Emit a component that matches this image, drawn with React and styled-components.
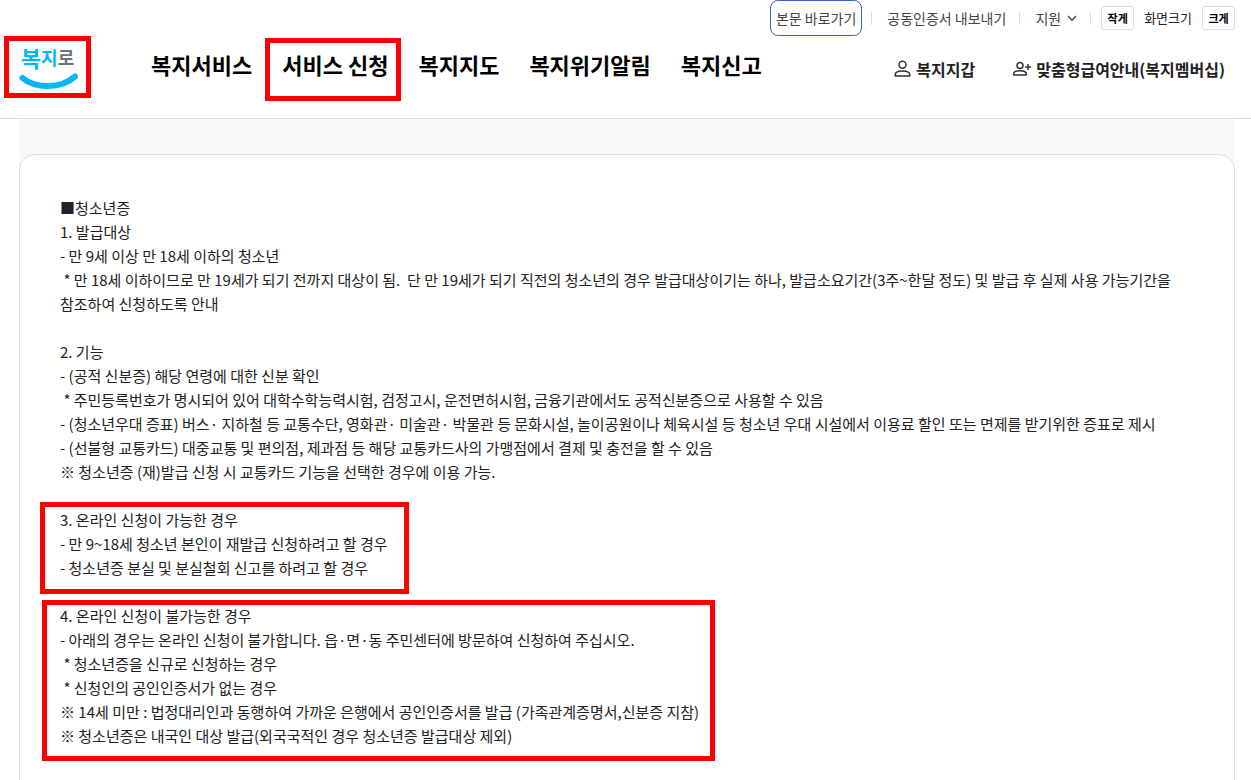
import React from "react";
import styled, { createGlobalStyle } from "styled-components";

const GlobalStyle = createGlobalStyle`
  *, *::before, *::after { box-sizing: border-box; }
  body {
    margin: 0;
    background: #fff;
    color: #222;
    font-family: "Noto Sans CJK KR", "Noto Sans", sans-serif;
    font-size: 15px;
    line-height: 24px;
  }
  a { color: inherit; text-decoration: none; }
  button { font: inherit; color: inherit; margin: 0; cursor: pointer; }
`;

const Header = styled.header`
  border-bottom: 1px solid #ddd;
`;

const UtilBar = styled.div`
  display: flex;
  align-items: center;
  justify-content: flex-end;
  height: 36px;
  padding-right: 16px;
  font-size: 14px;
  color: #444;
`;

const SkipLink = styled.a`
  display: flex;
  align-items: center;
  height: 36px;
  padding: 0 5px;
  border: 1px solid #3f5fd0;
  border-radius: 8px;
`;

const Divider = styled.span`
  width: 1px;
  height: 13px;
  margin: 0 ${(p) => p.$after || 15}px 0 ${(p) => p.$before || 13}px;
  background: #ddd;
`;

const SupportButton = styled.button`
  display: flex;
  align-items: center;
  gap: 6px;
  padding: 0;
  border: 0;
  background: none;
`;

const ZoomControls = styled.div`
  display: flex;
  align-items: center;
  gap: 10px;
  font-size: 13px;
  color: #222;
`;

const ZoomButton = styled.button`
  width: 33px;
  height: 24px;
  padding: 0;
  border: 1px solid #ddd;
  border-radius: 3px;
  background: #fff;
  color: #000;
  font-size: 11px;
  font-weight: 700;
  line-height: 20px;
`;

const MainBar = styled.div`
  display: flex;
  align-items: flex-start;
  padding: 0 26px 16px 4px;
`;

const Logo = styled.a`
  display: flex;
  flex-direction: column;
  align-items: center;
  width: 87px;
  height: 62px;
  margin-right: 60px;
  border: 5px solid #f00;
  overflow: hidden;
`;

const LogoText = styled.span`
  display: flex;
  align-items: center;
  height: 32px;
  font-size: 18px;
  font-weight: 700;
  line-height: 32px;
  color: #04b6f2;
`;

const LogoLead = styled.span`
  font-size: 22px;
`;

const LogoTail = styled.span`
  color: #707478;
`;

const Nav = styled.nav`
  display: flex;
  gap: 30px;
`;

const NavLink = styled.a`
  position: relative;
  color: #000;
  font-size: 22px;
  font-weight: 700;
  line-height: 56px;
  white-space: nowrap;

  ${(p) =>
    p.$marked &&
    `&::after {
      content: "";
      position: absolute;
      inset: 2px -13px -9px -17px;
      border: 5px solid #f00;
    }`}
`;

const QuickLinks = styled.div`
  display: flex;
  gap: 36px;
  margin-left: auto;
`;

const QuickLink = styled.a`
  display: flex;
  align-items: center;
  gap: 4px;
  height: 66px;
  font-size: 16px;
  font-weight: 700;
  white-space: nowrap;
`;

const Main = styled.main`
  margin: 0 16px 0 19px;
  padding-top: 35px;
  background: #f9f9f9;
`;

const Card = styled.article`
  padding: 41px 40px;
  border: 1px solid #ddd;
  border-radius: 16px 16px 0 0;
  background: #fff;
`;

const Section = styled.section`
  position: relative;
  width: ${(p) => (p.$mark ? "fit-content" : "auto")};
  margin-bottom: 24px;

  ${(p) =>
    p.$mark &&
    `&::after {
      content: "";
      position: absolute;
      inset: ${p.$mark};
      border: 5px solid #f00;
      pointer-events: none;
    }`}
`;

const Title = styled.h2`
  margin: 0;
  font-size: inherit;
  font-weight: 400;
`;

const Line = styled.p`
  margin: 0;
  white-space: pre-wrap;
  word-break: keep-all;
`;

const PersonIcon = () => (
  <svg width="18" height="18" viewBox="0 0 18 18" fill="none" stroke="#333" strokeWidth="1.5" aria-hidden="true">
    <circle cx="8.500" cy="4.700" r="3.500" />
    <path d="M1.200 16v-1.200c0-2.300 3-3.900 7.300-3.900s7.300 1.600 7.300 3.900V16z" strokeLinejoin="round" />
  </svg>
);

const PersonAddIcon = () => (
  <svg width="21" height="18" viewBox="0 0 21 18" fill="none" stroke="#333" strokeWidth="1.5" aria-hidden="true">
    <circle cx="9" cy="5.500" r="3" />
    <path d="M2.700 15v-1c0-1.900 2.500-3.300 6.300-3.300s6.300 1.400 6.300 3.300v1z" strokeLinejoin="round" />
    <path d="M17 4v6M14 7h6" />
  </svg>
);

const Chevron = () => (
  <svg width="10" height="7" viewBox="0 0 10 7" fill="none" stroke="#444" strokeWidth="1.3" aria-hidden="true">
    <path d="M1 1l4 4.3L9 1" />
  </svg>
);

const Smile = () => (
  <svg width="60" height="17" viewBox="0 0 60 17" fill="none" stroke="#04b6f2" strokeLinecap="round" aria-hidden="true">
    <path d="M4.500 5C18 16 43 16 57 3.500" strokeWidth="6" />
  </svg>
);

const sections = [
  {
    title: "■청소년증",
    lines: [
      "1. 발급대상",
      "- 만 9세 이상 만 18세 이하의 청소년",
      " * 만 18세 이하이므로 만 19세가 되기 전까지 대상이 됨.  단 만 19세가 되기 직전의 청소년의 경우 발급대상이기는 하나, 발급소요기간(3주~한달 정도) 및 발급 후 실제 사용 가능기간을 참조하여 신청하도록 안내",
    ],
  },
  {
    title: "2. 기능",
    lines: [
      "- (공적 신분증) 해당 연령에 대한 신분 확인",
      " * 주민등록번호가 명시되어 있어 대학수학능력시험, 검정고시, 운전면허시험, 금융기관에서도 공적신분증으로 사용할 수 있음",
      "- (청소년우대 증표) 버스· 지하철 등 교통수단, 영화관· 미술관· 박물관 등 문화시설, 놀이공원이나 체육시설 등 청소년 우대 시설에서 이용료 할인 또는 면제를 받기위한 증표로 제시",
      "- (선불형 교통카드) 대중교통 및 편의점, 제과점 등 해당 교통카드사의 가맹점에서 결제 및 충전을 할 수 있음",
      "※ 청소년증 (재)발급 신청 시 교통카드 기능을 선택한 경우에 이용 가능.",
    ],
  },
  {
    title: "3. 온라인 신청이 가능한 경우",
    mark: "-6px -21px -14px -20px",
    lines: [
      "- 만 9~18세 청소년 본인이 재발급 신청하려고 할 경우",
      "- 청소년증 분실 및 분실철회 신고를 하려고 할 경우",
    ],
  },
  {
    title: "4. 온라인 신청이 불가능한 경우",
    mark: "-4px -16px -13px -18px",
    lines: [
      "- 아래의 경우는 온라인 신청이 불가합니다. 읍·면·동 주민센터에 방문하여 신청하여 주십시오.",
      " * 청소년증을 신규로 신청하는 경우",
      " * 신청인의 공인인증서가 없는 경우",
      "※ 14세 미만 : 법정대리인과 동행하여 가까운 은행에서 공인인증서를 발급 (가족관계증명서,신분증 지참)",
      "※ 청소년증은 내국인 대상 발급(외국국적인 경우 청소년증 발급대상 제외)",
    ],
  },
];

const menu = ["복지서비스", "서비스 신청", "복지지도", "복지위기알림", "복지신고"];

export default function App() {
  return (
    <>
      <GlobalStyle />
      <Header>
        <UtilBar>
          <SkipLink href="#content">본문 바로가기</SkipLink>
          <Divider $before={9} />
          <a href="#certificate">공동인증서 내보내기</a>
          <Divider />
          <SupportButton type="button">
            지원
            <Chevron />
          </SupportButton>
          <Divider $after={10} />
          <ZoomControls>
            <ZoomButton type="button">작게</ZoomButton>
            <span>화면크기</span>
            <ZoomButton type="button">크게</ZoomButton>
          </ZoomControls>
        </UtilBar>
        <MainBar>
          <Logo href="#home">
            <LogoText>
              <LogoLead>복</LogoLead>지<LogoTail>로</LogoTail>
            </LogoText>
            <Smile />
          </Logo>
          <Nav>
            {menu.map((name) => (
              <NavLink key={name} href="#menu" $marked={name === "서비스 신청"}>
                {name}
              </NavLink>
            ))}
          </Nav>
          <QuickLinks>
            <QuickLink href="#wallet">
              <PersonIcon />
              복지지갑
            </QuickLink>
            <QuickLink href="#membership">
              <PersonAddIcon />
              맞춤형급여안내(복지멤버십)
            </QuickLink>
          </QuickLinks>
        </MainBar>
      </Header>
      <Main id="content">
        <Card>
          {sections.map((section) => (
            <Section key={section.title} $mark={section.mark}>
              <Title>{section.title}</Title>
              {section.lines.map((line) => (
                <Line key={line}>{line}</Line>
              ))}
            </Section>
          ))}
        </Card>
      </Main>
    </>
  );
}
